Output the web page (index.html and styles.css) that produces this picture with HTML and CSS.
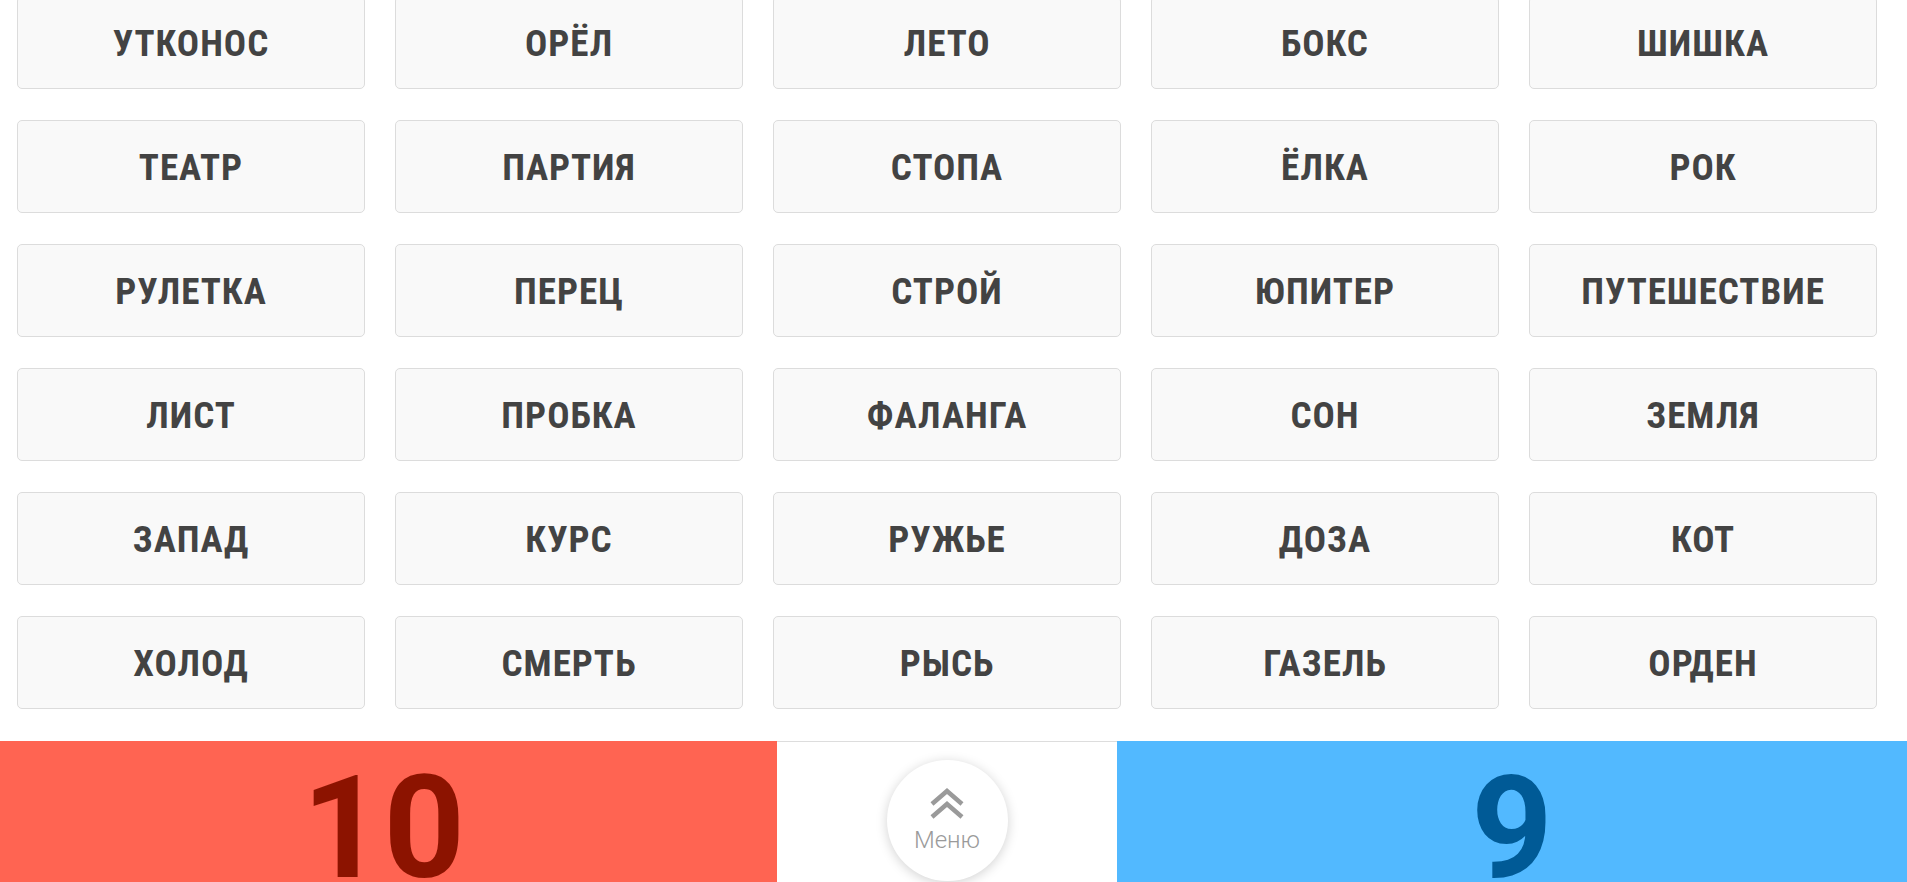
FILE: index.html
```html
<!DOCTYPE html>
<html lang="ru">
<head>
<meta charset="utf-8">
<title>Слова</title>
<link rel="stylesheet" href="styles.css">
</head>
<body>
<div class="page">
  <div class="board">
    <div class="card">УТКОНОС</div>
    <div class="card">ОРЁЛ</div>
    <div class="card">ЛЕТО</div>
    <div class="card">БОКС</div>
    <div class="card">ШИШКА</div>
    <div class="card">ТЕАТР</div>
    <div class="card">ПАРТИЯ</div>
    <div class="card">СТОПА</div>
    <div class="card">ЁЛКА</div>
    <div class="card">РОК</div>
    <div class="card">РУЛЕТКА</div>
    <div class="card">ПЕРЕЦ</div>
    <div class="card">СТРОЙ</div>
    <div class="card">ЮПИТЕР</div>
    <div class="card">ПУТЕШЕСТВИЕ</div>
    <div class="card">ЛИСТ</div>
    <div class="card">ПРОБКА</div>
    <div class="card">ФАЛАНГА</div>
    <div class="card">СОН</div>
    <div class="card">ЗЕМЛЯ</div>
    <div class="card">ЗАПАД</div>
    <div class="card">КУРС</div>
    <div class="card">РУЖЬЕ</div>
    <div class="card">ДОЗА</div>
    <div class="card">КОТ</div>
    <div class="card">ХОЛОД</div>
    <div class="card">СМЕРТЬ</div>
    <div class="card">РЫСЬ</div>
    <div class="card">ГАЗЕЛЬ</div>
    <div class="card">ОРДЕН</div>
  </div>
  <div class="footer">
    <div class="score score-red">10</div>
    <div class="middle">
      <div class="menu-btn">
        <svg class="chev" width="36" height="32" viewBox="0 0 36 32">
          <path d="M3 16 L18 3 L33 16" fill="none" stroke="#9a9a9a" stroke-width="4.5"/>
          <path d="M3 29 L18 16 L33 29" fill="none" stroke="#9a9a9a" stroke-width="4.5"/>
        </svg>
        <span class="menu-label">Меню</span>
      </div>
    </div>
    <div class="score score-blue">9</div>
  </div>
</div>
</body>
</html>
```
FILE: styles.css
```css
html, body {
  margin: 0;
  padding: 0;
  background: #ffffff;
}
body {
  width: 1907px;
  height: 882px;
  overflow: hidden;
  font-family: "Roboto Condensed", Roboto, "Liberation Sans", sans-serif;
}
.page {
  display: flex;
  flex-direction: column;
}
.board {
  display: grid;
  grid-template-columns: repeat(5, 348px);
  grid-auto-rows: 93px;
  column-gap: 30px;
  row-gap: 31px;
  padding-left: 17px;
  margin-top: -4px;
}
.card {
  box-sizing: border-box;
  background: #f9f9f9;
  border: 1px solid #dcdcdc;
  border-radius: 5px;
  display: flex;
  align-items: center;
  justify-content: center;
  font-weight: 700;
  font-size: 37px;
  letter-spacing: 1px;
  color: #434343;
  padding-top: 2px;
}
.footer {
  margin-top: 32px;
  height: 141px;
  display: flex;
}
.score {
  display: flex;
  justify-content: center;
  font-family: Roboto, "Liberation Sans", sans-serif;
  font-weight: 700;
  font-size: 142px;
  line-height: 1;
  padding-top: 17px;
  box-sizing: border-box;
}
.score-red {
  width: 777px;
  background: #ff6452;
  color: #8c1300;
  padding-right: 10px;
}
.score-blue {
  width: 790px;
  background: #52b9ff;
  color: #005a96;
}
.middle {
  width: 340px;
  box-sizing: border-box;
  border-top: 1px solid #dddddd;
  background: #ffffff;
  display: flex;
  justify-content: center;
  padding-top: 18px;
}
.menu-btn {
  width: 121px;
  height: 121px;
  border-radius: 50%;
  background: #ffffff;
  box-shadow: 0 2px 12px rgba(0, 0, 0, 0.18);
  display: flex;
  flex-direction: column;
  align-items: center;
  padding-top: 28px;
  box-sizing: border-box;
}
.chev {
  display: block;
}
.menu-label {
  font-family: Roboto, "Liberation Sans", sans-serif;
  font-weight: 300;
  font-size: 24px;
  line-height: 28px;
  color: #9a9a9a;
  margin-top: 6px;
}
```
